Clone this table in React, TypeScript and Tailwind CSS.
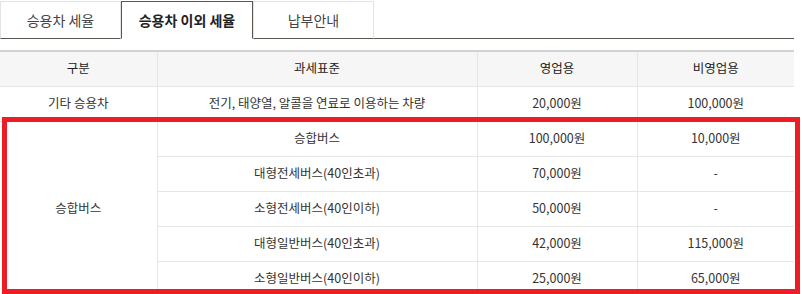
import React from "react";

const font = { fontFamily: '"Malgun Gothic", "Noto Sans CJK KR", "Noto Sans", sans-serif' };

const rows = [
  ["승합버스", "100,000원", "10,000원"],
  ["대형전세버스(40인초과)", "70,000원", "-"],
  ["소형전세버스(40인이하)", "50,000원", "-"],
  ["대형일반버스(40인초과)", "42,000원", "115,000원"],
  ["소형일반버스(40인이하)", "25,000원", "65,000원"],
];

export default function App() {
  return (
    <div className="relative w-[802px] h-[294px] overflow-hidden bg-white text-[#333]" style={font}>
      <div className="w-[794px]">
        <div className="flex h-[39px] border-b border-[#5d5650] pt-px">
          <div className="w-[121px] -mb-px flex items-center justify-center border border-[#e3e3e3] border-b-[#5d5650] text-[14px] text-[#444]">
            승용차 세율
          </div>
          <div className="w-[132px] -mb-px flex items-center justify-center border border-[#5d5650] border-b-white bg-white text-[14px] font-bold text-[#222]">
            승용차 이외 세율
          </div>
          <div className="w-[121px] -mb-px flex items-center justify-center border border-[#e3e3e3] border-b-[#5d5650] text-[14px] text-[#444]">
            납부안내
          </div>
        </div>
        <table className="mt-[11px] w-[794px] border-collapse table-fixed text-[12.5px]">
          <colgroup>
            <col className="w-[157px]" />
            <col className="w-[320px]" />
            <col className="w-[160px]" />
            <col className="w-[157px]" />
          </colgroup>
          <thead>
            <tr className="h-[35px] bg-[#f6f6f6] border-t-2 border-[#d2d2d2]">
              <th className="font-normal text-[#222] border-r border-b border-[#e6e6e6]">구분</th>
              <th className="font-normal text-[#222] border-r border-b border-[#e6e6e6]">과세표준</th>
              <th className="font-normal text-[#222] border-r border-b border-[#e6e6e6]">영업용</th>
              <th className="font-normal text-[#222] border-b border-[#e6e6e6]">비영업용</th>
            </tr>
          </thead>
          <tbody>
            <tr className="h-[35px]">
              <td className="text-center border-r border-b border-[#e6e6e6]">기타 승용차</td>
              <td className="text-center border-r border-b border-[#e6e6e6]">전기, 태양열, 알콜을 연료로 이용하는 차량</td>
              <td className="text-center border-r border-b border-[#e6e6e6]">20,000원</td>
              <td className="text-center border-b border-[#e6e6e6]">100,000원</td>
            </tr>
            {rows.map((r, i) => (
              <tr key={i} className="h-[35px]">
                {i === 0 && (
                  <td rowSpan={5} className="text-center border-r border-b border-[#e6e6e6]">
                    승합버스
                  </td>
                )}
                <td className="text-center border-r border-b border-[#e6e6e6]">{r[0]}</td>
                <td className="text-center border-r border-b border-[#e6e6e6]">{r[1]}</td>
                <td className="text-center border-b border-[#e6e6e6]">{r[2]}</td>
              </tr>
            ))}
          </tbody>
        </table>
      </div>
      <div className="absolute left-[2px] top-[117px] w-[798px] h-[177px] border-[5px] border-[#ee1c25] pointer-events-none" />
    </div>
  );
}
